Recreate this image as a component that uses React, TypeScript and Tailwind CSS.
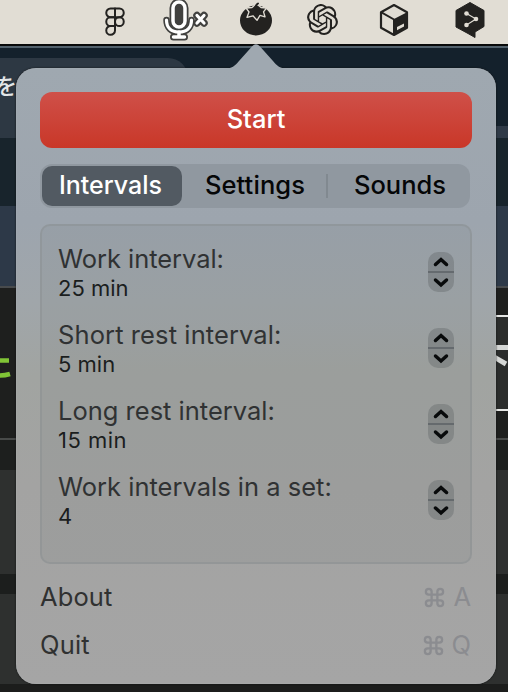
import React from "react";
import { Command, Figma } from "lucide-react";
import { SiOpenai } from "react-icons/si";

const intervals = [
  { label: "Work interval:", value: "25 min", tracking: "tracking-normal", labelTracking: "tracking-[-0.05px]" },
  { label: "Short rest interval:", value: "5 min", tracking: "tracking-normal", labelTracking: "tracking-[0.1px]" },
  { label: "Long rest interval:", value: "15 min", tracking: "tracking-[0.5px]", labelTracking: "tracking-normal" },
  { label: "Work intervals in a set:", value: "4", tracking: "tracking-normal", labelTracking: "tracking-normal" },
];

function MenuBar() {
  return (
    <header className="relative h-11 w-full shrink-0 bg-[#e1ddd4] text-[#232220]">
      <Figma className="absolute left-[100px] top-[6px] h-[30px] w-[30px]" strokeWidth={1.6} />
      <svg className="absolute left-[162px] top-0" width="48" height="44" viewBox="0 0 48 44" fill="none">
        <g stroke="#41413f" strokeLinecap="round" strokeLinejoin="round">
          <rect x="11" y="2" width="12" height="25" rx="6" strokeWidth="7" />
          <path d="M4.500 20c0 8 5 12 12.500 12s12.500-4 12.500-12" strokeWidth="6.500" />
          <path d="M17 32v5M11.500 37h11" strokeWidth="7" />
          <path d="m42 15.500-7 7.500M35 15.500l7 7.500" strokeWidth="7.500" />
        </g>
        <g stroke="#fff" strokeLinecap="round">
          <rect x="11" y="2" width="12" height="25" rx="6" fill="#41413f" strokeWidth="3.500" />
          <path d="M4.500 20c0 8 5 12 12.500 12s12.500-4 12.500-12" strokeWidth="3.200" />
          <path d="M17 32v5M11.500 37h11" strokeWidth="3.500" />
          <path d="m42 15.500-7 7.500M35 15.500l7 7.500" strokeWidth="3.200" />
        </g>
      </svg>
      <svg className="absolute left-[238px] top-[2px]" width="36" height="36" viewBox="0 0 36 36">
        <ellipse cx="18" cy="18.500" rx="16" ry="15" fill="#232220" />
        <path d="M8 6 14 5.500 17 3h3l3 2.500 5.500.5-3 3.800 1.500 5-5-1.500-3 5-4-4.500-6 1.500L11 10Z" fill="#232220" stroke="#e1ddd4" strokeWidth="1.300" strokeLinejoin="round" />
        <path d="M17.300 6.500c0-2.500 1-4 2.700-5" fill="none" stroke="#232220" strokeWidth="2" strokeLinecap="round" />
      </svg>
      <SiOpenai className="absolute left-[307px] top-[4px] h-[31px] w-[31px]" />
      <svg className="absolute left-[379px] top-[3px]" width="31" height="34" viewBox="0 0 31 34">
        <path d="m15 2 13 7.200v15.600L15 32 2 24.800V9.200Z" fill="none" stroke="currentColor" strokeWidth="2.200" strokeLinejoin="round" />
        <path d="m2 9.200 13 7.300" stroke="currentColor" strokeWidth="2" />
        <path d="m14 16.500 14-7.300v15.600L15 32l-1-.5Z" fill="currentColor" />
        <path d="m18 24 7-3.600v3.200l-7 3.700Z" fill="#e1ddd4" />
      </svg>
      <svg className="absolute left-[455px] top-[1px]" width="30" height="38" viewBox="0 0 30 38">
        <path d="M15 1.500 29 9.500v16L20 31v5.500L13 32.500 1 26V9.500Z" fill="currentColor" stroke="currentColor" strokeLinejoin="round" />
        <path d="m11.500 12.500 9.500 5.500-9.500 6" fill="none" stroke="#e1ddd4" strokeWidth="1.200" />
        <g fill="#e1ddd4">
          <circle cx="11.500" cy="12.500" r="2.300" />
          <circle cx="21" cy="18" r="2.300" />
          <circle cx="11.500" cy="24" r="2.300" />
        </g>
      </svg>
    </header>
  );
}

function Backdrop() {
  return (
    <div className="flex h-[648px] w-full flex-col overflow-hidden">
      <div className="h-[2px] shrink-0 bg-[#080909]" />
      <div className="h-[2px] shrink-0 bg-[#52616c]" />
      <div className="flex h-[90px] shrink-0 justify-between bg-[#14212c] pt-[10px]">
        <div className="h-20 w-[188px] rounded-tr-[20px] bg-[#2d3843] pt-[10px]">
          <span className="-ml-[5px] block font-['Noto_Sans_CJK_JP',sans-serif] text-[22px] font-medium leading-[32px] text-[#e3e6e8]">を</span>
        </div>
        <div className="mt-[68px] h-3 w-5 bg-[#2f3a47]" />
      </div>
      <div className="h-[68px] shrink-0 bg-[#18242c]" />
      <div className="h-20 shrink-0 bg-[#2d3948]" />
      <div className="h-[2px] shrink-0 bg-[#484b4d]" />
      <div className="flex h-[150px] shrink-0 justify-between bg-[#1e1f1e]">
        <svg width="16" height="150" viewBox="0 0 16 150" fill="none" stroke="#80c436" strokeWidth="4.500">
          <path d="M0 72.500h9M0 87.500q5 0 10-1.500" />
        </svg>
        <svg width="12" height="150" viewBox="0 0 12 150">
          <path d="M0 29h12v92H0Z" fill="#2b2d2c" />
          <path d="M0 28h12M0 122h12" stroke="#e6e7e5" strokeWidth="2" />
          <path d="M0 59.500h12" stroke="#d5d7d5" strokeWidth="5" />
          <path d="m-2 69 12 7" stroke="#d5d7d5" strokeWidth="5" />
        </svg>
      </div>
      <div className="h-[2px] shrink-0 bg-[#484a49]" />
      <div className="h-[30px] shrink-0 bg-[#1d1f1e]" />
      <div className="h-[104px] shrink-0 bg-[#2e302f]" />
      <div className="h-5 shrink-0 bg-[#1c1e1d]" />
      <div className="h-[90px] shrink-0 bg-[#2e302f]" />
      <div className="h-2 shrink-0 bg-[#1c1d1c]" />
    </div>
  );
}

function Stepper() {
  return (
    <div className="flex h-10 w-[26px] flex-col items-center rounded-[10px] bg-[#62666a]/40">
      <svg width="26" height="40" viewBox="0 0 26 40" fill="none">
        <path d="M0 20h26" stroke="#595e63" strokeOpacity=".7" strokeWidth="2" />
        <path d="m7.500 12.500 5.500-5 5.500 5M7.500 28l5.500 5 5.500-5" stroke="#080a0b" strokeWidth="3.500" strokeLinecap="round" strokeLinejoin="miter" />
      </svg>
    </div>
  );
}

function Popover() {
  return (
    <main className="absolute left-4 top-[68px] flex h-[616px] w-[480px] flex-col rounded-[20px] bg-[linear-gradient(180deg,#9fa8b0_0%,#9da5ae_25%,#a0a6aa_38%,#a1a4a1_50%,#a3a3a2_68%,#a5a5a5_100%)] px-6 pt-6 shadow-[0_0_2px_#111,inset_0_0_1px_#c4c9cd]">
      <svg className="absolute -top-[24px] left-[208px]" width="64" height="25" viewBox="0 0 64 25">
        <path d="M0 25c8-.5 11-3 15-8L28 2.500c3-3 5-3 8 0L49 17c4 5 7 7.500 15 8Z" fill="#9fa8b0" />
      </svg>
      <button className="h-14 shrink-0 rounded-xl bg-[linear-gradient(180deg,#cf5049,#c93728)] pb-[2px] text-[25.5px] font-medium leading-[54px] text-white">
        Start
      </button>
      <nav className="mt-4 flex h-11 w-[430px] shrink-0 items-center rounded-[12px] bg-[#9098a0] py-[2px] pl-[2px] text-[25.5px] font-medium text-[#050607]">
        <div className="h-10 w-[140px] shrink-0 rounded-[10px] bg-[#525a62] pr-[3px] text-center text-[25px] leading-[38px] text-white">Intervals</div>
        <div className="flex h-10 w-[144px] shrink-0 justify-center pl-[2px] leading-[38px] tracking-[0.1px]">Settings</div>
        <div className="h-6 w-[2px] shrink-0 bg-[#818990]" />
        <div className="flex h-10 w-[142px] shrink-0 justify-center pl-[2px] leading-[38px]">Sounds</div>
      </nav>
      <section className="mt-4 flex h-[340px] shrink-0 flex-col rounded-[10px] border-2 border-[#8a8f92]/50 bg-[#7c8082]/15 px-4 pt-[18px]">
        {intervals.map((item) => (
          <div key={item.label} className="flex h-[76px] justify-between">
            <div className="whitespace-nowrap">
              <div className={`h-[30px] text-[25.5px] leading-[30px] text-[#303233] ${item.labelTracking}`}>{item.label}</div>
              <div className={`h-7 text-[22px] leading-7 text-[#1b1e1e] ${item.tracking}`}>{item.value}</div>
            </div>
            <div className="pt-2">
              <Stepper />
            </div>
          </div>
        ))}
      </section>
      <footer className="mt-[9px] text-[25.5px] leading-[48px] text-[#303131]">
        <div className="flex h-12 justify-between">
          <span className="tracking-[0.1px]">About</span>
          <span className="flex items-center gap-[7px] pr-px text-[#8b8c90]"><Command size={23} strokeWidth={2.4} />A</span>
        </div>
        <div className="flex h-12 justify-between">
          <span className="tracking-[0.2px]">Quit</span>
          <span className="flex items-center gap-[7px] pr-px text-[#8b8c90]"><Command size={23} strokeWidth={2.4} />Q</span>
        </div>
      </footer>
    </main>
  );
}

export default function App() {
  return (
    <div className="relative h-[692px] w-[508px] overflow-hidden font-['Inter',sans-serif]">
      <MenuBar />
      <Backdrop />
      <Popover />
    </div>
  );
}
